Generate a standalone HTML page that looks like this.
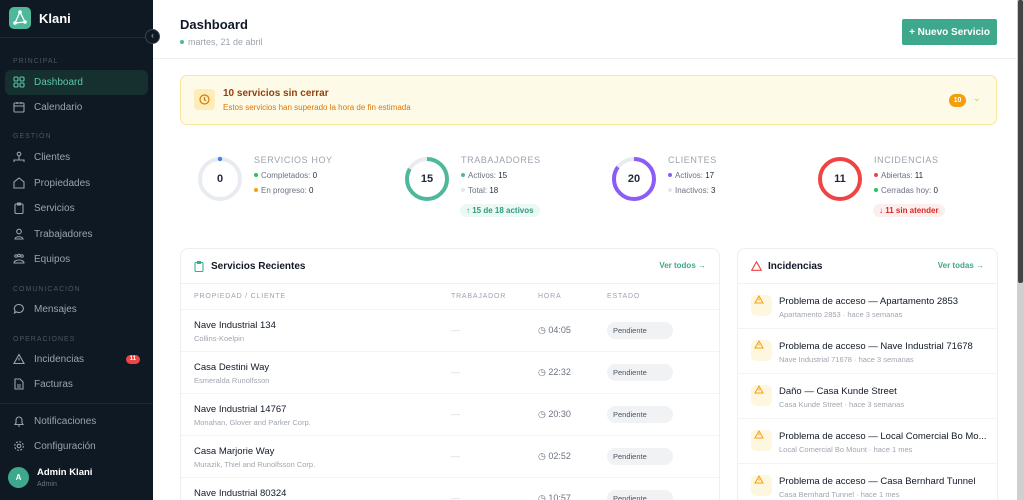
<!DOCTYPE html>
<html style="overflow:hidden;width:1024px;height:500px"><head><meta charset="utf-8"><style>
*{box-sizing:border-box;margin:0;padding:0}
body{width:1024px;height:500px;overflow:hidden;font-family:"Liberation Sans",sans-serif;background:#fff;position:relative;color:#111827}
.sb{position:absolute;left:0;top:0;width:153px;height:500px;background:#0f1923;color:#9aa3ad}
.logo{position:absolute;left:9px;top:7px;width:22px;height:22px;border-radius:5px;background:#4fb89b}
.brand{position:absolute;left:39px;top:11px;color:#fff;font-weight:bold;font-size:13px}
.sbline{position:absolute;left:0;width:153px;height:1px;background:#1c2833}
.sec{position:absolute;left:13px;font-size:7px;letter-spacing:1px;color:#4b5663}
.it{position:absolute;left:5px;width:143px;height:25px;border-radius:6px;font-size:10px;padding-left:29px;line-height:25px;color:#9aa3ad}
.it svg{position:absolute;left:8px;top:6px}
.it.act{background:#15302e;color:#5cc7a7}
.badge{position:absolute;right:8px;top:8px;background:#ef4444;color:#fff;font-size:6px;font-weight:bold;border-radius:5px;padding:0 4px;line-height:9px}
.col{position:absolute;left:145px;top:29px;width:15px;height:15px;border-radius:50%;background:#0f1923;border:1px solid #3a4652;color:#ccc;font-size:8px;text-align:center;line-height:12px}
.av{position:absolute;left:8px;top:467px;width:21px;height:21px;border-radius:50%;background:#3ea88d;color:#fff;font-size:8px;font-weight:bold;text-align:center;line-height:21px}
.main{position:absolute;left:153px;top:0;width:864px;height:500px;overflow:hidden}
.hdr{position:absolute;left:0;top:0;width:864px;height:59px;border-bottom:1px solid #eef0f2}
h1{position:absolute;left:27px;top:17px;font-size:13px;font-weight:bold}
.date{position:absolute;left:27px;top:37px;font-size:9px;color:#9ca3af}
.date i{display:inline-block;width:4px;height:4px;border-radius:50%;background:#4fb89b;margin-right:4px;vertical-align:1px}
.btn{position:absolute;left:749px;top:19px;width:95px;height:26px;background:#3ea88d;color:#fff;font-size:10px;font-weight:bold;display:flex;align-items:center;justify-content:center;border-radius:2px}
.alert{position:absolute;left:27px;top:75px;width:817px;height:50px;background:#fefae8;border:1px solid #fbe59a;border-radius:7px}
.alert .ic{position:absolute;left:13px;top:13px;width:21px;height:21px;background:#fdedb8;border-radius:4px}
.alert b{position:absolute;left:42px;top:12px;font-size:10px;color:#92400e}
.alert span{position:absolute;left:42px;top:27px;font-size:8px;color:#d97706}
.alert .n{position:absolute;left:768px;top:18px;width:17px;height:13px;border-radius:7px;background:#f59e0b;color:#fff;font-size:7px;font-weight:bold;text-align:center;line-height:13px}
.stat{position:absolute;top:150px}
.stat svg{position:absolute;left:0;top:5px}
.stat .num{position:absolute;left:0;top:23px;width:48px;text-align:center;font-size:11px;font-weight:bold;color:#1f2937}
.stat .t{position:absolute;left:58px;top:5px;font-size:9px;letter-spacing:.6px;color:#9ca3af;white-space:nowrap}
.stat .l{position:absolute;left:58px;font-size:8px;color:#6b7280;white-space:nowrap}
.stat .l i{display:inline-block;width:4px;height:4px;border-radius:50%;margin-right:3px;vertical-align:1px}
.stat .l b{color:#1f2937;font-weight:normal}
.pill{position:absolute;left:57px;top:54px;font-size:8px;font-weight:bold;padding:0 6px;line-height:13px;border-radius:7px;white-space:nowrap}
.card{position:absolute;top:248px;border:1px solid #eceef1;border-radius:8px;height:262px;overflow:hidden;background:#fff}
.ch{height:35px;border-bottom:1px solid #f0f1f3;position:relative}
.ch b{position:absolute;left:30px;top:12px;font-size:10px}
.ch a{position:absolute;right:13px;top:12px;font-size:8px;color:#3ea88d;font-weight:bold}
.th{height:26px;border-bottom:1px solid #f2f3f5;position:relative;font-size:7px;letter-spacing:.8px;color:#9ca3af}
.th span,.row span{position:absolute}
.row{height:42px;border-bottom:1px solid #f2f3f5;position:relative}
.row .a{left:13px;top:10px;font-size:9.5px;color:#111827}
.row .b{left:13px;top:24px;font-size:7.5px;color:#a0a6af}
.row .d{left:270px;top:15px;font-size:9px;color:#d1d5db}
.row .h{left:357px;top:15px;font-size:9px;color:#6b7280}
.row .p{left:426px;top:12px;width:66px;height:17px;border-radius:9px;background:#f1f2f4;font-size:7.5px;color:#4b5563;padding-left:6px;line-height:17px}
.irow{height:45px;border-bottom:1px solid #f2f3f5;position:relative}
.irow .ic{position:absolute;left:13px;top:11px;width:21px;height:21px;border-radius:5px;background:#fef7e0}
.irow .a{position:absolute;left:41px;top:12px;font-size:9.5px;color:#111827;white-space:nowrap}
.irow .b{position:absolute;left:41px;top:26px;font-size:7.5px;color:#a0a6af;white-space:nowrap}
.scr{position:absolute;left:1017px;top:0;width:7px;height:500px;background:#cfcfcf}
.thumb{position:absolute;left:1018px;top:0;width:5px;height:283px;background:#444;border-radius:2px}
</style></head><body>
<div class="sb">
 <div class="logo"><svg width="22" height="22" viewBox="0 0 22 22"><path d="M11 5L6 16L16 15Z" fill="none" stroke="#fff" stroke-width="1.3"/><circle cx="11" cy="5" r="1.8" fill="#fff"/><circle cx="6" cy="16" r="1.8" fill="#fff"/><circle cx="16" cy="15" r="1.8" fill="#fff"/></svg></div>
 <div class="brand">Klani</div>
 <div class="sbline" style="top:37px"></div>
 <div class="sec" style="top:58px">PRINCIPAL</div>
 <div class="it act" style="top:70px"><svg width="12" height="12" viewBox="0 0 12 12" fill="none" stroke="#5cc7a7" stroke-width="1.1"><rect x="1" y="1" width="4" height="4" rx="1"/><rect x="7" y="1" width="4" height="4" rx="1"/><rect x="1" y="7" width="4" height="4" rx="1"/><rect x="7" y="7" width="4" height="4" rx="1"/></svg>Dashboard</div>
 <div class="it" style="top:95px"><svg width="12" height="12" viewBox="0 0 12 12" fill="none" stroke="#9aa3ad" stroke-width="1.1"><rect x="1" y="2" width="10" height="9" rx="1"/><path d="M1 5h10M4 1v2M8 1v2"/></svg>Calendario</div>
 <div class="sec" style="top:133px">GESTIÓN</div>
 <div class="it" style="top:145px"><svg width="12" height="12" viewBox="0 0 12 12" fill="none" stroke="#9aa3ad" stroke-width="1.1"><circle cx="6" cy="3" r="1.8"/><path d="M1 11V9h10v2M6 5v4"/></svg>Clientes</div>
 <div class="it" style="top:171px"><svg width="12" height="12" viewBox="0 0 12 12" fill="none" stroke="#9aa3ad" stroke-width="1.1"><path d="M1 11V5l5-4 5 4v6z"/></svg>Propiedades</div>
 <div class="it" style="top:196px"><svg width="12" height="12" viewBox="0 0 12 12" fill="none" stroke="#9aa3ad" stroke-width="1.1"><rect x="2" y="2" width="8" height="9.5" rx="1"/><path d="M4.5 1h3v2h-3z"/></svg>Servicios</div>
 <div class="it" style="top:222px"><svg width="12" height="12" viewBox="0 0 12 12" fill="none" stroke="#9aa3ad" stroke-width="1.1"><circle cx="6" cy="3.5" r="2.3"/><path d="M2 11c0-3 8-3 8 0z"/></svg>Trabajadores</div>
 <div class="it" style="top:247px"><svg width="12" height="12" viewBox="0 0 12 12" fill="none" stroke="#9aa3ad" stroke-width="1"><circle cx="3" cy="3" r="1.3"/><circle cx="6" cy="2.5" r="1.3"/><circle cx="9" cy="3" r="1.3"/><path d="M1 10c0-4 10-4 10 0z"/></svg>Equipos</div>
 <div class="sec" style="top:286px">COMUNICACIÓN</div>
 <div class="it" style="top:297px"><svg width="12" height="12" viewBox="0 0 12 12" fill="none" stroke="#9aa3ad" stroke-width="1.1"><path d="M6 1.5a4.5 4 0 1 1-2.5 7.4L1.5 10l.6-2.3A4.5 4 0 0 1 6 1.5z"/></svg>Mensajes</div>
 <div class="sec" style="top:336px">OPERACIONES</div>
 <div class="it" style="top:347px"><svg width="12" height="12" viewBox="0 0 12 12" fill="none" stroke="#9aa3ad" stroke-width="1.1"><path d="M6 1.5L11 10.5H1z M6 5v2.5M6 9v.1"/></svg>Incidencias<span class="badge">11</span></div>
 <div class="it" style="top:372px"><svg width="12" height="12" viewBox="0 0 12 12" fill="none" stroke="#9aa3ad" stroke-width="1.1"><path d="M2 1h5l3 3v7H2z M4 7h4M4 9h4"/></svg>Facturas</div>
 <div class="sbline" style="top:403px"></div>
 <div class="it" style="top:409px"><svg width="12" height="12" viewBox="0 0 12 12" fill="none" stroke="#9aa3ad" stroke-width="1.1"><path d="M3 8V5a3 3 0 0 1 6 0v3l1 1.5H2z M5 11h2"/></svg>Notificaciones</div>
 <div class="it" style="top:434px"><svg width="12" height="12" viewBox="0 0 12 12" fill="none" stroke="#9aa3ad" stroke-width="1.1"><circle cx="6" cy="6" r="1.8"/><circle cx="6" cy="6" r="4.3" stroke-dasharray="2 1.4"/></svg>Configuración</div>
 <div class="av">A</div>
 <div style="position:absolute;left:37px;top:467px;color:#fff;font-size:9.5px;font-weight:bold">Admin Klani</div>
 <div style="position:absolute;left:37px;top:481px;color:#6b7580;font-size:7px">Admin</div>
</div>
<div class="col">‹</div>
<div class="main">
 <div class="hdr"><h1>Dashboard</h1><div class="date"><i></i>martes, 21 de abril</div><div class="btn">+ Nuevo Servicio</div></div>
 <div class="alert"><div class="ic"><svg width="21" height="21" viewBox="0 0 21 21" fill="none" stroke="#d97706" stroke-width="1.2"><circle cx="10.5" cy="10.5" r="4.5"/><path d="M10.5 8v2.8l1.5 1"/></svg></div><b>10 servicios sin cerrar</b><span>Estos servicios han superado la hora de fin estimada</span><div class="n">10</div><div style="position:absolute;left:792px;top:17px;color:#e2b35a;font-size:9px">⌄</div></div>
 <div class="stat" style="left:43px"><svg width="48" height="48"><circle cx="24" cy="24" r="20" fill="none" stroke="#e8ecf0" stroke-width="4"/><circle cx="24" cy="4" r="2.2" fill="#3b82f6"/></svg><div class="num">0</div><div class="t">SERVICIOS HOY</div><div class="l" style="top:21px"><i style="background:#22c55e"></i>Completados: <b>0</b></div><div class="l" style="top:36px"><i style="background:#f59e0b"></i>En progreso: <b>0</b></div></div>
 <div class="stat" style="left:250px"><svg width="48" height="48"><circle cx="24" cy="24" r="20" fill="none" stroke="#e8ecf0" stroke-width="4"/><circle cx="24" cy="24" r="20" fill="none" stroke="#4fb89b" stroke-width="4" stroke-dasharray="104.7 125.7" transform="rotate(-90 24 24)"/></svg><div class="num">15</div><div class="t">TRABAJADORES</div><div class="l" style="top:21px"><i style="background:#4fb89b"></i>Activos: <b>15</b></div><div class="l" style="top:36px"><i style="background:#e5e7eb"></i>Total: <b>18</b></div><div class="pill" style="background:#ecf8f4;color:#2f9c7e">↑ 15 de 18 activos</div></div>
 <div class="stat" style="left:457px"><svg width="48" height="48"><circle cx="24" cy="24" r="20" fill="none" stroke="#e8ecf0" stroke-width="4"/><circle cx="24" cy="24" r="20" fill="none" stroke="#8b5cf6" stroke-width="4" stroke-dasharray="106.8 125.7" transform="rotate(-90 24 24)"/></svg><div class="num">20</div><div class="t">CLIENTES</div><div class="l" style="top:21px"><i style="background:#8b5cf6"></i>Activos: <b>17</b></div><div class="l" style="top:36px"><i style="background:#e5e7eb"></i>Inactivos: <b>3</b></div></div>
 <div class="stat" style="left:663px"><svg width="48" height="48"><circle cx="24" cy="24" r="20" fill="none" stroke="#ef4444" stroke-width="4"/></svg><div class="num">11</div><div class="t">INCIDENCIAS</div><div class="l" style="top:21px"><i style="background:#ef4444"></i>Abiertas: <b>11</b></div><div class="l" style="top:36px"><i style="background:#22c55e"></i>Cerradas hoy: <b>0</b></div><div class="pill" style="background:#fdeeee;color:#dc2626">↓ 11 sin atender</div></div>
 <div class="card" style="left:27px;width:540px">
  <div class="ch"><svg style="position:absolute;left:13px;top:12px" width="10" height="11" viewBox="0 0 10 11" fill="none" stroke="#3ea88d" stroke-width="1.1"><rect x="1" y="1.5" width="8" height="9" rx="1"/><path d="M3.5 .6h3v1.8h-3z"/></svg><b>Servicios Recientes</b><a>Ver todos →</a></div>
  <div class="th"><span style="left:13px;top:9px">PROPIEDAD / CLIENTE</span><span style="left:270px;top:9px">TRABAJADOR</span><span style="left:357px;top:9px">HORA</span><span style="left:426px;top:9px">ESTADO</span></div>
  <div class="row"><span class="a">Nave Industrial 134</span><span class="b">Collins-Koelpin</span><span class="d">—</span><span class="h">◷ 04:05</span><span class="p">Pendiente</span></div>
  <div class="row"><span class="a">Casa Destini Way</span><span class="b">Esmeralda Runolfsson</span><span class="d">—</span><span class="h">◷ 22:32</span><span class="p">Pendiente</span></div>
  <div class="row"><span class="a">Nave Industrial 14767</span><span class="b">Monahan, Glover and Parker Corp.</span><span class="d">—</span><span class="h">◷ 20:30</span><span class="p">Pendiente</span></div>
  <div class="row"><span class="a">Casa Marjorie Way</span><span class="b">Murazik, Thiel and Runolfsson Corp.</span><span class="d">—</span><span class="h">◷ 02:52</span><span class="p">Pendiente</span></div>
  <div class="row"><span class="a">Nave Industrial 80324</span><span class="b"></span><span class="d">—</span><span class="h">◷ 10:57</span><span class="p">Pendiente</span></div>
 </div>
 <div class="card" style="left:584px;width:261px">
  <div class="ch"><svg style="position:absolute;left:13px;top:12px" width="11" height="10" viewBox="0 0 11 10" fill="none" stroke="#ef4444" stroke-width="1.1"><path d="M5.5 .8L10.3 9.3H.7z"/></svg><b>Incidencias</b><a>Ver todas →</a></div>
  <div class="irow"><div class="ic"></div><div class="a">Problema de acceso — Apartamento 2853</div><div class="b">Apartamento 2853 · hace 3 semanas</div></div>
  <div class="irow"><div class="ic"></div><div class="a">Problema de acceso — Nave Industrial 71678</div><div class="b">Nave Industrial 71678 · hace 3 semanas</div></div>
  <div class="irow"><div class="ic"></div><div class="a">Daño — Casa Kunde Street</div><div class="b">Casa Kunde Street · hace 3 semanas</div></div>
  <div class="irow"><div class="ic"></div><div class="a">Problema de acceso — Local Comercial Bo Mo...</div><div class="b">Local Comercial Bo Mount · hace 1 mes</div></div>
  <div class="irow"><div class="ic"></div><div class="a">Problema de acceso — Casa Bernhard Tunnel</div><div class="b">Casa Bernhard Tunnel · hace 1 mes</div></div>
 </div>
</div>
<svg style="position:absolute;left:0;top:0" width="1024" height="500">
 <g fill="none" stroke="#f59e0b" stroke-width="1">
  <path d="M759 296l4 7h-8z M759 298.5v2"/><path d="M759 341l4 7h-8z M759 343.5v2"/><path d="M759 386l4 7h-8z M759 388.5v2"/><path d="M759 431l4 7h-8z M759 433.5v2"/><path d="M759 476l4 7h-8z M759 478.5v2"/>
 </g>
</svg>
<div class="scr"></div><div class="thumb"></div>
</body></html>
